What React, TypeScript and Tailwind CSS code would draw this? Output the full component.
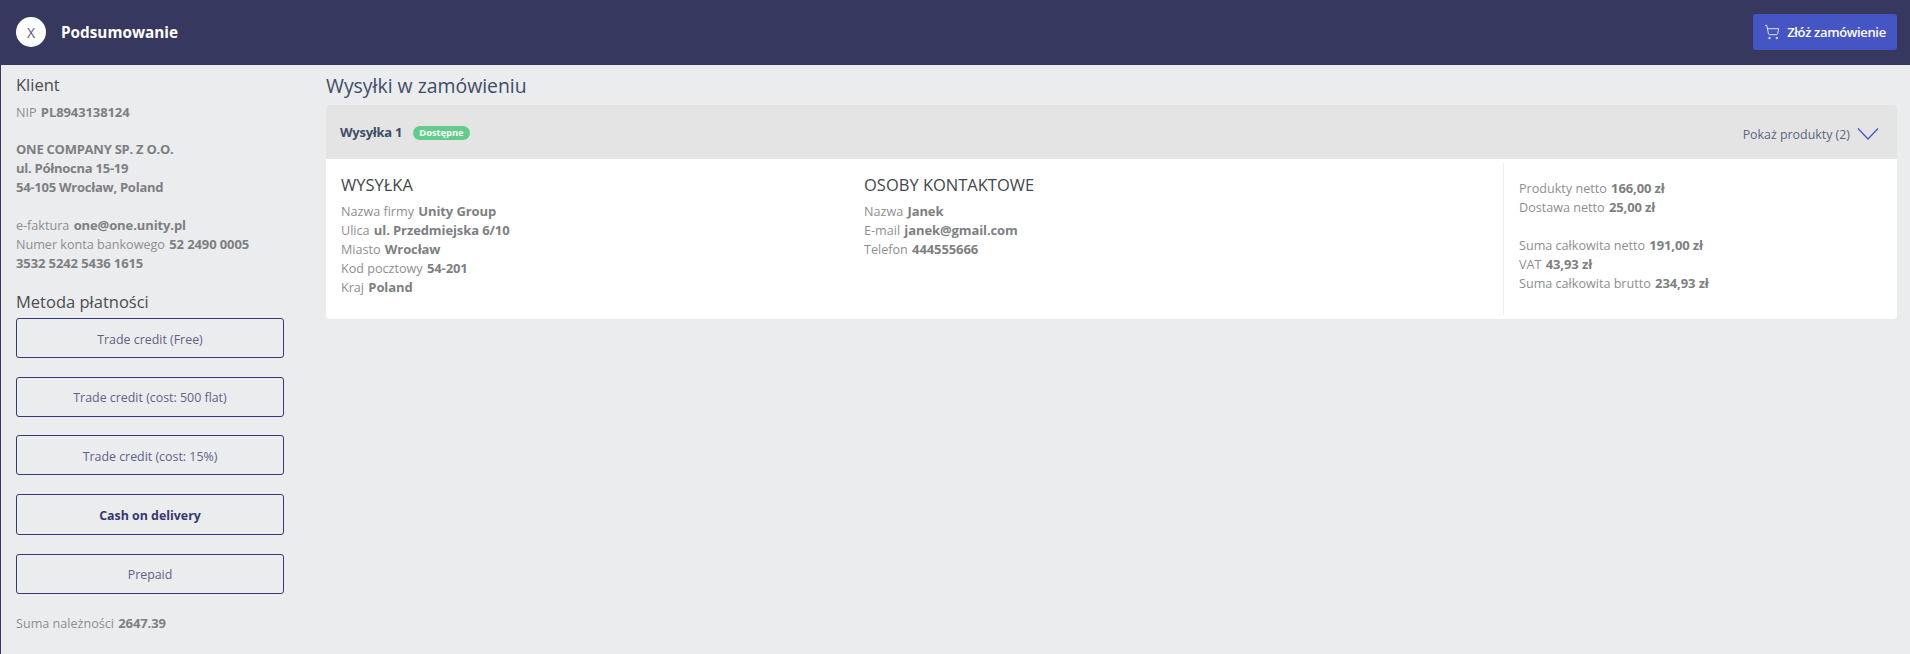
import { ShoppingCart } from 'lucide-react';

type Field = { label: string; value: string };

const PAYMENT_METHODS = [
  { name: 'Trade credit (Free)' },
  { name: 'Trade credit (cost: 500 flat)' },
  { name: 'Trade credit (cost: 15%)' },
  { name: 'Cash on delivery', active: true },
  { name: 'Prepaid' },
];

const SHIPPING: Field[] = [
  { label: 'Nazwa firmy', value: 'Unity Group' },
  { label: 'Ulica', value: 'ul. Przedmiejska 6/10' },
  { label: 'Miasto', value: 'Wrocław' },
  { label: 'Kod pocztowy', value: '54-201' },
  { label: 'Kraj', value: 'Poland' },
];

const CONTACT: Field[] = [
  { label: 'Nazwa', value: 'Janek' },
  { label: 'E-mail', value: 'janek@gmail.com' },
  { label: 'Telefon', value: '444555666' },
];

function Row({ label, value }: Field) {
  return (
    <div className="h-[19px] whitespace-nowrap text-[12.6px] text-[#8d8f91]">
      {label} <b className="ml-[1px] text-[13px] font-bold tracking-[-0.1px] text-[#7d7f81]">{value}</b>
    </div>
  );
}

export default function App() {
  return (
    <div className="flex h-[654px] flex-col overflow-hidden border-l border-[#36385f] bg-[#ebecee] font-['Open_Sans',sans-serif] text-[13px] leading-[19px]">
      {/* Pasek górny */}
      <header className="flex h-[65px] shrink-0 items-center justify-between border-b border-[#36385f] bg-[#36385f] pl-[15px] pr-[13px]">
        <div className="flex items-center gap-[15px]">
          <button type="button" className="grid h-[30px] w-[30px] place-items-center rounded-full bg-white text-[14px] text-[#55577a]">
            X
          </button>
          <h1 className="text-[15.3px] font-bold text-white">Podsumowanie</h1>
        </div>
        <button type="button" className="flex h-[36px] w-[144px] items-center justify-center gap-[7px] rounded-[3px] bg-[#4655c4] text-[13px] font-semibold tracking-[-0.35px] text-white">
          <ShoppingCart size={16} strokeWidth={1.25} />
          Złóż zamówienie
        </button>
      </header>

      <div className="flex flex-1">
        {/* Klient i płatność */}
        <aside className="w-[325px] shrink-0 pl-[15px] pt-[8px]">
          <h2 className="text-[16.5px] leading-[23px] font-medium text-[#4a4c50]">Klient</h2>
          <div className="mt-[7px]">
            <Row label="NIP" value="PL8943138124" />
          </div>
          <div className="mt-[18px] font-bold tracking-[-0.25px] text-[#7d7f81]">
            <div className="h-[19px]">ONE COMPANY SP. Z O.O.</div>
            <div className="h-[19px]">ul. Północna 15-19</div>
            <div className="h-[19px]">54-105 Wrocław, Poland</div>
          </div>
          <div className="mt-[19px]">
            <Row label="e-faktura" value="one@one.unity.pl" />
            <Row label="Numer konta bankowego" value="52 2490 0005" />
            <div className="h-[19px] font-bold tracking-[-0.1px] text-[#7d7f81]">3532 5242 5436 1615</div>
          </div>
          <h2 className="mt-[17px] text-[16.5px] leading-[23px] font-medium text-[#4a4c50]">Metoda płatności</h2>
          <div className="mt-[5px] flex w-[268px] flex-col gap-[18.7px]">
            {PAYMENT_METHODS.map((method) => (
              <button
                key={method.name}
                type="button"
                className={`rounded-[3px] border border-[#36387a] text-[12.4px] ${
                  method.active ? 'h-[41px] pt-[1px] font-bold text-[#36386f]' : 'h-[40px] pt-[2px] text-[#5f6288]'
                }`}
              >
                {method.name}
              </button>
            ))}
          </div>
          <div className="mt-[20px]">
            <Row label="Suma należności" value="2647.39" />
          </div>
        </aside>

        {/* Wysyłki */}
        <main className="min-w-0 flex-1 pr-[13px] pt-[6px]">
          <h2 className="h-[34px] text-[19.4px] leading-[30px] font-medium text-[#3f4d68]">Wysyłki w zamówieniu</h2>
          <section className="overflow-hidden rounded-[4px]">
            <div className="flex h-[54px] items-center justify-between bg-[#e4e4e4] pl-[14px] pr-[18px]">
              <div className="flex items-center gap-[11px]">
                <span className="font-bold tracking-[-0.25px] text-[#3f4d68]">Wysyłka 1</span>
                <span className="mt-[1px] rounded-full bg-[#62cd8a] px-[6px] text-[9.3px] leading-[14px] font-bold text-white">Dostępne</span>
              </div>
              <div className="flex items-center gap-[7px] pt-[5px] text-[12.4px] text-[#5a6480]">
                Pokaż produkty (2)
                <svg width="22" height="14" viewBox="0 0 22 14" fill="none" stroke="#4655c4" strokeWidth="1.3" className="-mt-[2px]">
                  <path d="M1 1.5 11 12 21 1.5" />
                </svg>
              </div>
            </div>
            <div className="flex h-[160px] bg-white py-[4px]">
              <div className="w-[523px] pl-[15px] pt-[11px]">
                <h3 className="text-[16.5px] leading-[22px] text-[#44474c]">WYSYŁKA</h3>
                <div className="mt-[6px]">
                  {SHIPPING.map((f) => (
                    <Row key={f.label} {...f} />
                  ))}
                </div>
              </div>
              <div className="w-[654px] pl-[15px] pt-[11px]">
                <h3 className="text-[16.5px] leading-[22px] text-[#44474c]">OSOBY KONTAKTOWE</h3>
                <div className="mt-[6px]">
                  {CONTACT.map((f) => (
                    <Row key={f.label} {...f} />
                  ))}
                </div>
              </div>
              <div className="flex-1 border-l border-[#eeeeee] pl-[15px] pt-[16px]">
                <Row label="Produkty netto" value="166,00 zł" />
                <Row label="Dostawa netto" value="25,00 zł" />
                <div className="mt-[19px]">
                  <Row label="Suma całkowita netto" value="191,00 zł" />
                  <Row label="VAT" value="43,93 zł" />
                  <Row label="Suma całkowita brutto" value="234,93 zł" />
                </div>
              </div>
            </div>
          </section>
        </main>
      </div>
    </div>
  );
}
